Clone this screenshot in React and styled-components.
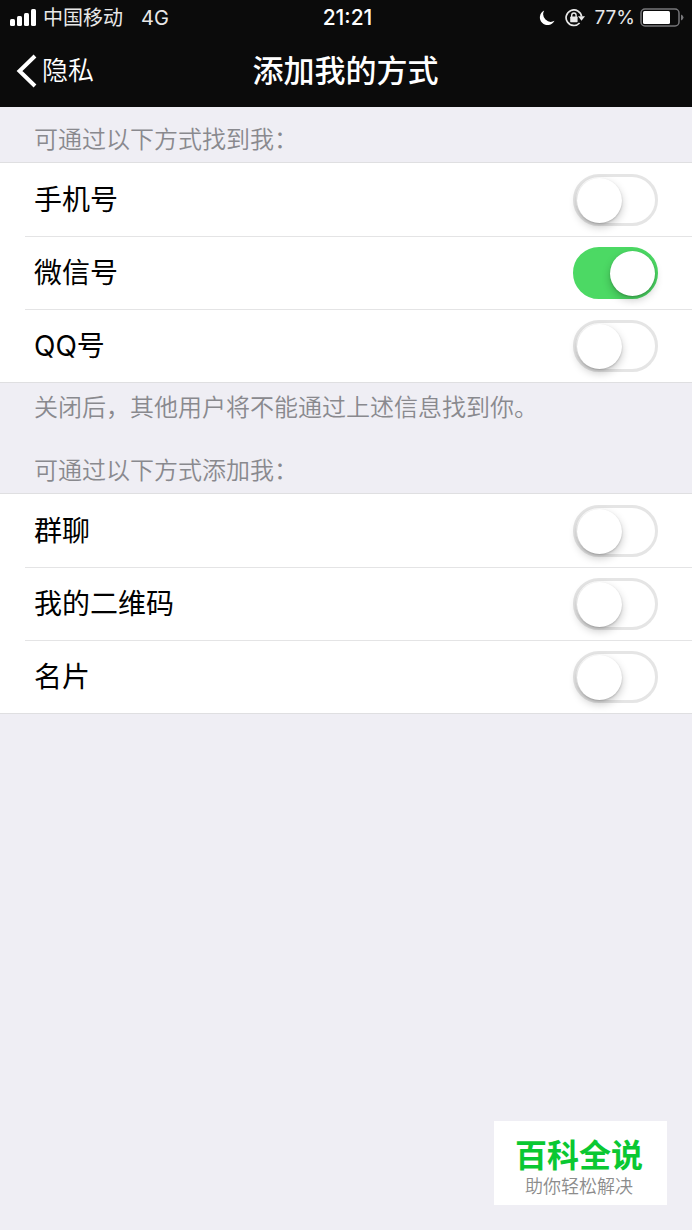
import React, { useState } from 'react';
import styled, { createGlobalStyle } from 'styled-components';

const GlobalStyle = createGlobalStyle`
    * {
        box-sizing: border-box;
    }

    body {
        margin: 0;
        background-color: #efeef4;
        font-family: Inter, 'Noto Sans CJK SC', sans-serif;
    }
`;

const Page = styled.div`
    position: relative;
    min-height: 100vh;
    background-color: #efeef4;
`;

const Header = styled.header`
    background-color: #0b0b0b;
    color: #fff;
`;

const StatusBar = styled.div`
    display: grid;
    grid-template-columns: 1fr auto 1fr;
    align-items: center;
    height: 35px;
    padding: 0 8px 0 9px;
    font-size: 20px;
    line-height: 24px;
`;

const StatusSide = styled.div`
    display: flex;
    align-items: center;
    justify-content: ${({ $end }) => ($end ? 'flex-end' : 'flex-start')};
    color: #e8e8e8;
`;

const Carrier = styled.span`
    margin: 0 18px 0 6px;
`;

const Clock = styled.time`
    padding-left: 2px;
    font-size: 21px;
    font-weight: 500;
`;

const BatteryLevel = styled.span`
    margin: 0 5px 0 9px;
    font-size: 19px;
`;

const NavBar = styled.nav`
    display: grid;
    grid-template-columns: 1fr auto 1fr;
    align-items: center;
    height: 72px;
    padding: 0 17px 0 16px;
`;

const BackButton = styled.button`
    display: flex;
    align-items: center;
    justify-self: start;
    gap: 5px;
    padding: 0;
    border: none;
    background: none;
    color: #fff;
    font-family: inherit;
    font-size: 26px;
    font-weight: 350;
    line-height: 32px;
    cursor: pointer;
`;

const Title = styled.h1`
    margin: 0;
    font-size: 31px;
    font-weight: 500;
    line-height: 40px;
`;

const SectionTitle = styled.h2`
    margin: 0;
    padding: 17px 34px 6px;
    color: #89898e;
    font-size: 24px;
    font-weight: 350;
    line-height: 32px;
`;

const SectionNote = styled.p`
    margin: 0;
    padding: 9px 34px 14px;
    color: #89898e;
    font-size: 24px;
    font-weight: 350;
    line-height: 32px;
`;

const Group = styled.div`
    padding-left: 25px;
    border-top: 1px solid #dfdfe1;
    border-bottom: 1px solid #dfdfe1;
    background-color: #fff;
`;

const Row = styled.label`
    display: flex;
    align-items: center;
    justify-content: space-between;
    height: 73px;
    padding: 0 34px 0 9px;
    color: #000;
    font-size: 28px;
    line-height: 40px;
    cursor: pointer;

    & + & {
        border-top: 1px solid #e4e4e5;
    }
`;

const Switch = styled.input`
    appearance: none;
    width: 85px;
    height: 52px;
    margin: 0;
    padding: 1px;
    border: 3px solid #e5e5e5;
    border-radius: 26px;
    background-color: #fff;
    cursor: pointer;

    &::before {
        content: '';
        display: block;
        width: 45px;
        height: 45px;
        border-radius: 50%;
        background-color: #fff;
        box-shadow: 0 4px 8px rgba(0, 0, 0, 0.22), 0 1px 2px rgba(0, 0, 0, 0.18);
    }

    &:checked {
        border-color: #4cd964;
        background-color: #4cd964;
    }

    &:checked::before {
        margin-left: 33px;
    }
`;

const Badge = styled.aside`
    position: absolute;
    right: 25px;
    bottom: 25px;
    padding: 15px 24px 8px 21px;
    background-color: #fff;
    text-align: center;
`;

const BadgeName = styled.div`
    color: #0ac832;
    font-size: 32px;
    font-weight: 700;
    line-height: 40px;
`;

const BadgeSlogan = styled.div`
    color: #8c8c8c;
    font-size: 18px;
    font-weight: 350;
    line-height: 21px;
`;

const SignalIcon = () => (
    <svg width="28" height="18" viewBox="0 0 28 18" fill="#fff">
        <rect x="1" y="10" width="5" height="7" rx="1.5" />
        <rect x="8" y="7" width="5" height="10" rx="1.5" />
        <rect x="15" y="4" width="5" height="13" rx="1.5" />
        <rect x="22" y="0" width="5" height="17" rx="1.5" />
    </svg>
);

const MoonIcon = () => (
    <svg width="16" height="16" viewBox="0 0 16 16" fill="#fff">
        <path d="M5.2 0.5A7.7 7.7 0 1 0 15.5 10.8A7.6 7.6 0 0 1 5.2 0.5Z" />
    </svg>
);

const LockIcon = styled.svg`
    margin-left: 10px;
`;

const RotationLockIcon = () => (
    <LockIcon width="20" height="18" viewBox="0 0 20 18" fill="none" stroke="#e8e8e8">
        <path d="M14.6 14A7.8 7.8 0 1 1 16.6 7.5" strokeWidth="1.7" />
        <path d="M13 7.2H20L16.5 11.8Z" fill="#e8e8e8" stroke="none" />
        <path d="M6.7 8.4V6.2A2.2 2.2 0 0 1 11.1 6.2V8.4" strokeWidth="1.4" />
        <rect x="5.2" y="7.6" width="7.4" height="5.6" rx="0.6" fill="#e8e8e8" stroke="none" />
    </LockIcon>
);

const BatteryIcon = () => (
    <svg width="44" height="20" viewBox="0 0 44 20">
        <rect x="1" y="1" width="38" height="17" rx="4" fill="none" stroke="#77777a" strokeWidth="1.5" />
        <rect x="3" y="3" width="27" height="13" rx="1.5" fill="#fff" />
        <path d="M41 6.5Q43.5 7.5 43.5 9.5T41 12.5Z" fill="#77777a" />
    </svg>
);

const BackIcon = () => (
    <svg width="21" height="34" viewBox="0 0 21 34" fill="none" stroke="#fff" strokeWidth="4">
        <path d="M19 2L3.5 17L19 32" />
    </svg>
);

const findOptions = [
    { id: 'phone', label: '手机号' },
    { id: 'wechat', label: '微信号' },
    { id: 'qq', label: 'QQ号' },
];

const addOptions = [
    { id: 'group', label: '群聊' },
    { id: 'qrcode', label: '我的二维码' },
    { id: 'card', label: '名片' },
];

const OptionGroup = ({ options, values, onChange }) => (
    <Group>
        {options.map(({ id, label }) => (
            <Row key={id} htmlFor={id}>
                {label}
                <Switch
                    type="checkbox"
                    role="switch"
                    id={id}
                    name={id}
                    checked={Boolean(values[id])}
                    onChange={onChange}
                />
            </Row>
        ))}
    </Group>
);

const App = () => {
    const [values, setValues] = useState({ wechat: true });

    const handleChange = (e) => {
        const { name, checked } = e.target;
        setValues((prev) => ({ ...prev, [name]: checked }));
    };

    return (
        <Page lang="zh-CN">
            <GlobalStyle />
            <Header>
                <StatusBar>
                    <StatusSide>
                        <SignalIcon />
                        <Carrier>中国移动</Carrier>
                        <span>4G</span>
                    </StatusSide>
                    <Clock>21:21</Clock>
                    <StatusSide $end>
                        <MoonIcon />
                        <RotationLockIcon />
                        <BatteryLevel>77%</BatteryLevel>
                        <BatteryIcon />
                    </StatusSide>
                </StatusBar>
                <NavBar>
                    <BackButton type="button">
                        <BackIcon />
                        隐私
                    </BackButton>
                    <Title>添加我的方式</Title>
                </NavBar>
            </Header>
            <main>
                <SectionTitle>可通过以下方式找到我：</SectionTitle>
                <OptionGroup options={findOptions} values={values} onChange={handleChange} />
                <SectionNote>关闭后，其他用户将不能通过上述信息找到你。</SectionNote>
                <SectionTitle>可通过以下方式添加我：</SectionTitle>
                <OptionGroup options={addOptions} values={values} onChange={handleChange} />
            </main>
            <Badge>
                <BadgeName>百科全说</BadgeName>
                <BadgeSlogan>助你轻松解决</BadgeSlogan>
            </Badge>
        </Page>
    );
};

export default App;
